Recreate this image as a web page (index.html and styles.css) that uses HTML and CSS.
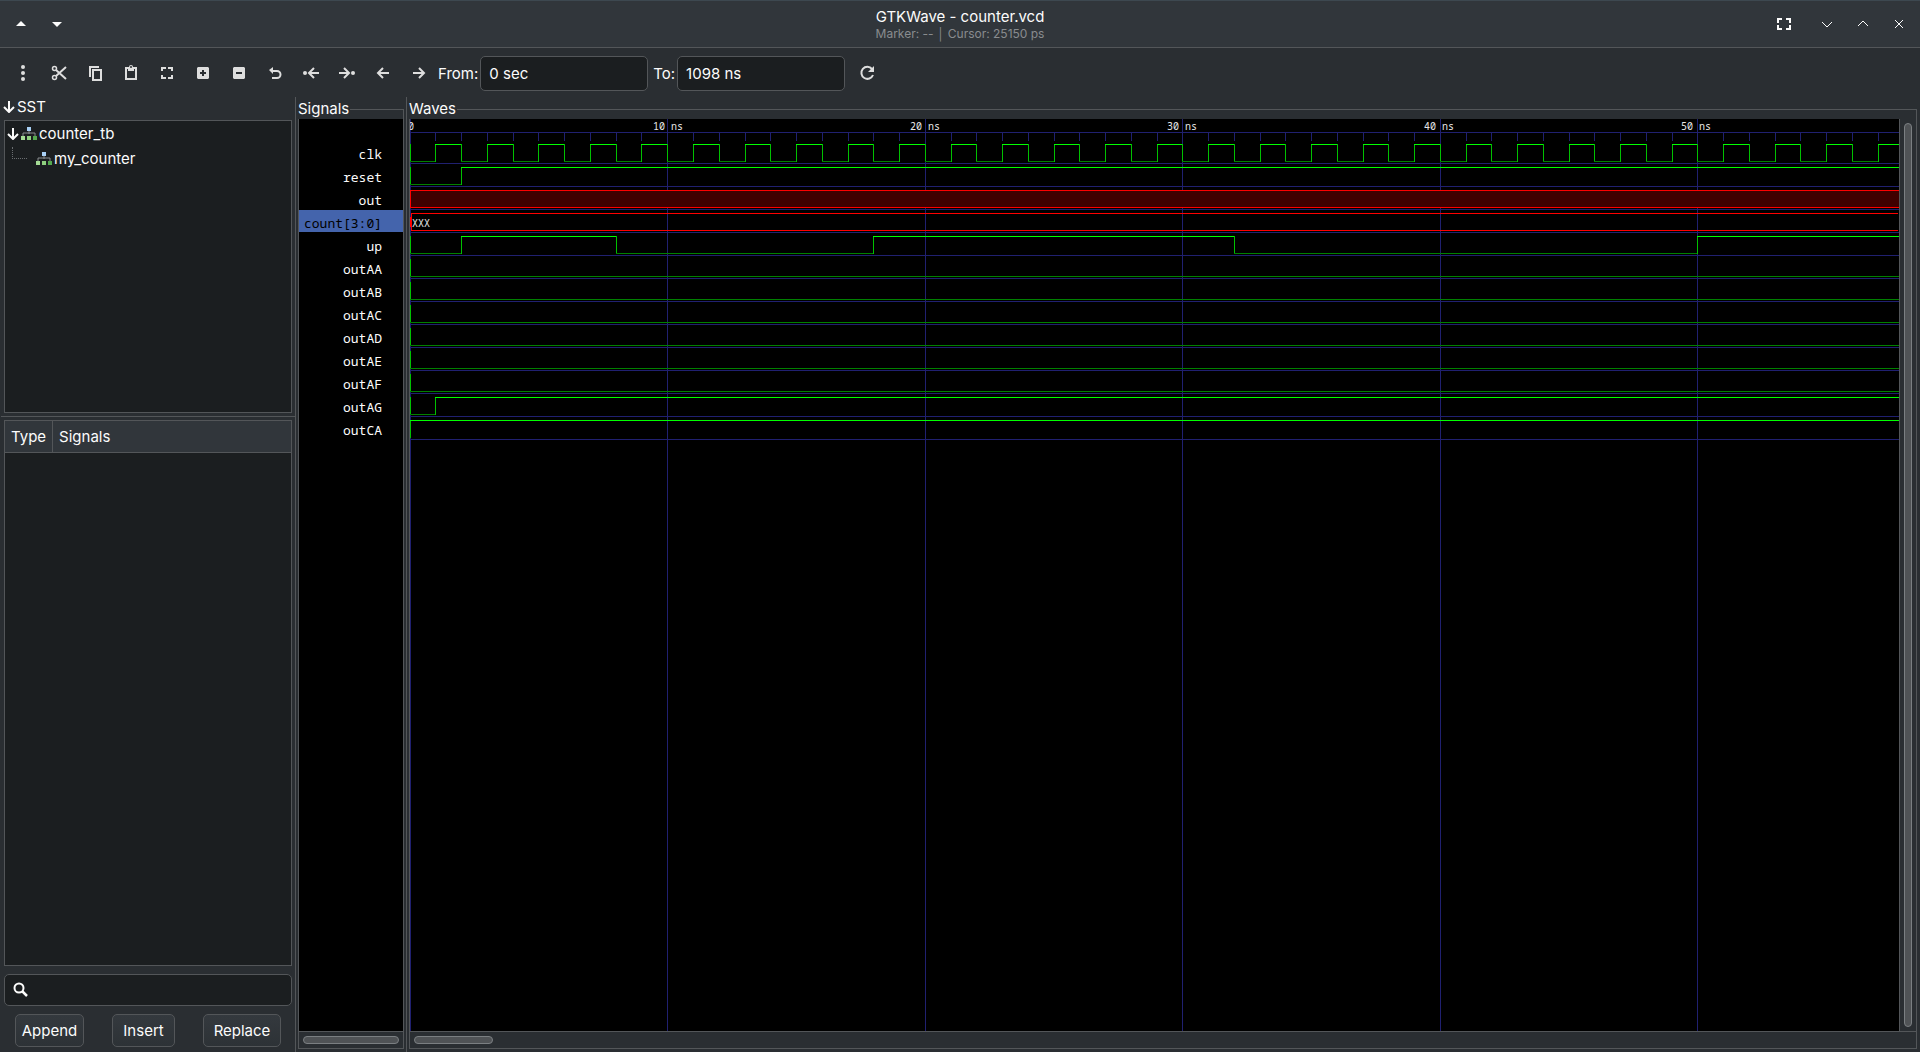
FILE: index.html
```html
<!DOCTYPE html>
<html lang="en">
<head>
    <meta charset="UTF-8">
    <meta name="viewport" content="width=device-width, initial-scale=1.0">
    <title>GTKWave - counter.vcd</title>
    <link rel="stylesheet" href="styles.css">
</head>
<body>
    <svg class="defs" aria-hidden="true">
        <symbol id="hierarchy" viewBox="0 0 16 14">
            <path d="M8 4v3M2 9V6h12v3" fill="none" stroke="#8a8d8f"/>
            <rect x="6" y="0" width="4" height="4" fill="#a9d0f5"/>
            <rect x="0" y="9" width="4" height="4" fill="#a5dc95"/>
            <rect x="6" y="9" width="4" height="4" fill="#8fd07f"/>
            <rect x="12" y="9" width="4" height="4" fill="#55a94f"/>
        </symbol>
        <symbol id="expander" viewBox="0 0 12 12">
            <path d="M6 0v11M1 6l5 5 5-5" fill="none" stroke="#fcfcfc" stroke-width="2"/>
        </symbol>
    </svg>

    <header class="titlebar">
        <div class="titlebar-side">
            <button type="button" aria-label="Keep above">
                <svg width="16" height="16"><path d="M3 10l5-5 5 5z" fill="currentColor"/></svg>
            </button>
            <button type="button" aria-label="Keep below">
                <svg width="16" height="16"><path d="M3 6l5 5 5-5z" fill="currentColor"/></svg>
            </button>
        </div>
        <div class="titles">
            <h1>GTKWave - counter.vcd</h1>
            <p>Marker: -- │ Cursor: 25150 ps</p>
        </div>
        <div class="titlebar-side titlebar-end">
            <button type="button" class="wide" aria-label="Full screen">
                <svg width="16" height="16"><path d="M2 7V3h4M10 3h4v4M14 9v4h-4M6 13H2V9" class="line thick"/></svg>
            </button>
            <button type="button" aria-label="Minimize">
                <svg width="16" height="16"><path d="M3 6l5 5 5-5" class="line"/></svg>
            </button>
            <button type="button" aria-label="Maximize">
                <svg width="16" height="16"><path d="M3 10l5-5 5 5" class="line"/></svg>
            </button>
            <button type="button" aria-label="Close">
                <svg width="16" height="16"><path d="M4 4l8 8M12 4l-8 8" class="line"/></svg>
            </button>
        </div>
    </header>

    <div class="toolbar">
        <button type="button" aria-label="Menu">
            <svg width="16" height="16"><g fill="currentColor"><circle cx="8" cy="2" r="2"/><circle cx="8" cy="8" r="2"/><circle cx="8" cy="14" r="2"/></g></svg>
        </button>
        <button type="button" aria-label="Cut">
            <svg width="16" height="16"><circle cx="3.5" cy="3.5" r="2" class="line bold"/><circle cx="3.5" cy="12.5" r="2" class="line bold"/><path d="M5 5l10 9M5 11l10-9" class="line thick"/></svg>
        </button>
        <button type="button" aria-label="Copy">
            <svg width="16" height="16"><path d="M3 12V2h9M6 5h8v10H6z" class="line thick"/></svg>
        </button>
        <button type="button" aria-label="Paste">
            <svg width="16" height="16"><path d="M3 3h10v11H3z" class="line thick"/><path d="M5 2h6v4H5z" fill="currentColor"/><circle cx="8" cy="2" r="2" fill="currentColor"/><circle cx="8" cy="2" r="1" fill="#2a2e32"/></svg>
        </button>
        <button type="button" aria-label="Zoom fit">
            <svg width="16" height="16"><path d="M3 6V3h4M9 3h4v3M13 10v3H9M7 13H3v-3" class="line thick"/></svg>
        </button>
        <button type="button" aria-label="Zoom in">
            <svg width="16" height="16"><path d="M3 2h10l1 1v10l-1 1H3l-1-1V3z" fill="currentColor"/><path d="M8 5v6M5 8h6" stroke="#2a2e32" stroke-width="2"/></svg>
        </button>
        <button type="button" aria-label="Zoom out">
            <svg width="16" height="16"><path d="M3 2h10l1 1v10l-1 1H3l-1-1V3z" fill="currentColor"/><path d="M5 8h6" stroke="#2a2e32" stroke-width="2"/></svg>
        </button>
        <button type="button" aria-label="Zoom undo">
            <svg width="16" height="16"><path d="M5 6h5a3.5 3.5 0 0 1 0 7H5" class="line thick"/><path d="M2 5l4-3v7z" fill="currentColor"/></svg>
        </button>
        <button type="button" aria-label="Previous edge">
            <svg width="16" height="16"><circle cx="2" cy="8" r="2" fill="currentColor"/><path d="M16 8H7M11 3L6 8l5 5" class="line thick"/></svg>
        </button>
        <button type="button" aria-label="Next edge">
            <svg width="16" height="16"><circle cx="14" cy="8" r="2" fill="currentColor"/><path d="M0 8h9M5 3l5 5-5 5" class="line thick"/></svg>
        </button>
        <button type="button" aria-label="Previous page">
            <svg width="16" height="16"><path d="M14 8H4M8 3L3 8l5 5" class="line thick"/></svg>
        </button>
        <button type="button" aria-label="Next page">
            <svg width="16" height="16"><path d="M2 8h10M8 3l5 5-5 5" class="line thick"/></svg>
        </button>
        <label for="from">From:</label>
        <input type="text" id="from" value="0 sec">
        <label for="to">To:</label>
        <input type="text" id="to" value="1098 ns">
        <button type="button" aria-label="Reload">
            <svg width="16" height="16"><path d="M13 4a6 6 0 1 0 1 6" class="line thick"/><path d="M15 1v6H9z" fill="currentColor"/></svg>
        </button>
    </div>

    <main class="panes">
        <section class="sst">
            <h2 class="sst-title"><svg width="12" height="12"><use href="#expander"/></svg>SST</h2>
            <ul class="tree">
                <li class="root"><svg width="12" height="12"><use href="#expander"/></svg><svg width="16" height="14"><use href="#hierarchy"/></svg>counter_tb</li>
                <li class="child"><span class="branch"></span><svg width="16" height="14"><use href="#hierarchy"/></svg>my_counter</li>
            </ul>
            <div class="handle"></div>
            <div class="facilities">
                <table>
                    <thead>
                        <tr>
                            <th class="type">Type</th>
                            <th>Signals</th>
                        </tr>
                    </thead>
                    <tbody></tbody>
                </table>
            </div>
            <div class="search">
                <svg width="16" height="16"><circle cx="6" cy="6" r="4.5" class="line thick"/><path d="M9 9l5 5" class="line heavy"/></svg>
                <input type="text" id="search" aria-label="Filter signals">
            </div>
            <div class="actions">
                <button type="button" class="append">Append</button>
                <button type="button" class="insert">Insert</button>
                <button type="button" class="replace">Replace</button>
            </div>
        </section>

        <section class="frame signals">
            <h2>Signals</h2>
            <div class="frame-body">
                <ul class="names" id="names"></ul>
                <div class="hscroll"><div class="thumb full"></div></div>
            </div>
        </section>

        <section class="frame waves">
            <h2>Waves</h2>
            <div class="frame-body">
                <div class="view">
                    <svg class="canvas" id="canvas"></svg>
                    <div class="vscroll"><div class="thumb"></div></div>
                </div>
                <div class="hscroll"><div class="thumb part"></div></div>
            </div>
        </section>
    </main>

    <script>
        const canvas = document.getElementById('canvas');
        const names = document.getElementById('names');

        const NS = 25.752;      // pixels per nanosecond
        const ROW = 23;
        const WIDTH = Math.floor(canvas.getBoundingClientRect().width);
        const END = Math.ceil(WIDTH / NS);

        const clock = [];
        for (let t = 1; t < END; t++) clock.push(t);

        // edges: times in ns where the level toggles
        const signals = [
            { name: 'clk', start: 0, edges: clock },
            { name: 'reset', start: 0, edges: [2] },
            { name: 'out', unknown: true },
            { name: 'count[3:0]', bus: 'XXX', selected: true },
            { name: 'up', start: 0, edges: [2, 8, 18, 32, 50] },
            { name: 'outAA', start: 0, edges: [] },
            { name: 'outAB', start: 0, edges: [] },
            { name: 'outAC', start: 0, edges: [] },
            { name: 'outAD', start: 0, edges: [] },
            { name: 'outAE', start: 0, edges: [] },
            { name: 'outAF', start: 0, edges: [] },
            { name: 'outAG', start: 0, edges: [1] },
            { name: 'outCA', start: 1, edges: [] }
        ];

        function xAt(t) {
            return Math.min(WIDTH, Math.floor(t * NS + 0.23));
        }

        function add(tag, attrs, text) {
            const el = document.createElementNS('http://www.w3.org/2000/svg', tag);
            for (const key in attrs) el.setAttribute(key, attrs[key]);
            if (text) el.textContent = text;
            canvas.appendChild(el);
        }

        function hline(x1, x2, y, cls) {
            add('rect', { x: x1, y: y, width: x2 - x1, height: 1, class: cls });
        }

        function vline(x, y1, y2, cls) {
            add('rect', { x: x, y: y1, width: 1, height: y2 - y1, class: cls });
        }

        // time grid
        hline(0, WIDTH, 13, 'grid');
        for (let t = 0; t < END; t++) {
            if (t % 10 === 0) {
                add('rect', { x: xAt(t), y: 0, width: 1, height: '100%', class: 'grid' });
                add('text', { x: Math.round(t * 25.7) + 1, y: 11, 'text-anchor': 'middle' }, t === 0 ? '0' : t + ' ns');
            } else {
                vline(xAt(t), 13, 22, 'grid');
            }
        }

        signals.forEach((signal, i) => {
            const li = document.createElement('li');
            li.textContent = signal.name;
            if (signal.selected) li.className = 'selected';
            names.appendChild(li);

            const high = 25 + i * ROW;
            const low = high + 17;
            hline(0, WIDTH, low + 2, 'grid');

            if (signal.unknown) {
                add('rect', { x: 0, y: high, width: WIDTH, height: 18, class: 'undef' });
                vline(0, high, low + 1, 'bad');
                hline(0, WIDTH, high, 'bad');
                hline(0, WIDTH, low, 'bad');
            } else if (signal.bus) {
                vline(1, high, low + 1, 'bad');
                vline(0, high + 4, low - 3, 'bad');
                hline(1, WIDTH - 1, high, 'bad');
                hline(1, WIDTH - 1, low, 'bad');
                add('text', { x: 2, y: low - 3 }, signal.bus);
            } else {
                let level = signal.start;
                let from = 0;
                vline(0, high, low + 1, 'edge');
                signal.edges.concat(END).forEach(t => {
                    hline(xAt(from), xAt(t), level ? high : low, level ? 'high' : 'low');
                    if (t < END) vline(xAt(t), high, low + 1, 'edge');
                    level = 1 - level;
                    from = t;
                });
            }
        });
    </script>
</body>
</html>
```
FILE: styles.css
```css
* {
    box-sizing: border-box;
}
body {
    display: flex;
    flex-direction: column;
    height: 100vh;
    margin: 0;
    overflow: hidden;
    background-color: #2a2e32;
    color: #fcfcfc;
    font-family: Inter, sans-serif;
    font-size: 15px;
}
h1, h2, p, ul {
    margin: 0;
    padding: 0;
    font-size: 15px;
    font-weight: 400;
}
ul {
    list-style: none;
}
svg {
    display: block;
    flex: none;
}
button, input {
    font: inherit;
    color: inherit;
}
.defs {
    display: none;
}
.line {
    fill: none;
    stroke: currentColor;
}
.bold {
    stroke-width: 1.5;
}
.thick {
    stroke-width: 2;
}
.heavy {
    stroke-width: 2.5;
}

/* title bar */
.titlebar {
    display: flex;
    align-items: center;
    height: 48px;
    padding: 0 3px;
    border-top: 1px solid #3d4850;
    border-bottom: 1px solid #535659;
    background-color: #31363b;
}
.titlebar-side {
    display: flex;
    flex: 1;
}
.titlebar-end {
    justify-content: flex-end;
}
.titlebar button, .toolbar button {
    display: flex;
    align-items: center;
    justify-content: center;
    width: 36px;
    height: 36px;
    padding: 0;
    border: none;
    background: none;
}
.titlebar .wide {
    width: 50px;
}
.titles {
    text-align: center;
}
.titles h1 {
    line-height: 18px;
}
.titles p {
    color: #898c8f;
    font-size: 12px;
    line-height: 15px;
}

/* toolbar */
.toolbar {
    display: flex;
    align-items: center;
    height: 49px;
    padding: 1px 5px 0;
}
.toolbar button {
    color: #dedede;
}
.toolbar label {
    padding: 0 2px 0 1px;
}
.toolbar input {
    width: 168px;
    height: 35px;
    margin-right: 4px;
    padding: 0 8px;
}
input {
    border: 1px solid #535659;
    border-radius: 5px;
    background-color: #1b1e20;
}

/* panes */
.panes {
    display: flex;
    flex: 1;
    min-height: 0;
}
.sst {
    display: flex;
    flex-direction: column;
    width: 295px;
    padding: 0 3px 5px 4px;
}
.sst-title {
    display: flex;
    align-items: center;
    gap: 2px;
    height: 23px;
    padding-bottom: 4px;
    margin-left: -1px;
}
.tree {
    height: 293px;
    border: 1px solid #535659;
    background-color: #1b1e20;
}
.tree li {
    display: flex;
    align-items: center;
    gap: 2px;
    height: 25px;
    padding-left: 2px;
}
.tree .child {
    padding-left: 7px;
}
.branch {
    width: 15px;
    height: 12px;
    margin: 0 7px 12px 0;
    border: 1px dotted #6a6d70;
    border-width: 0 0 1px 1px;
}
.handle {
    height: 1px;
    margin: 3px -3px 3px -3px;
    background-color: #535659;
}
.facilities {
    flex: 1;
    border: 1px solid #535659;
    background-color: #1b1e20;
}
table {
    width: 100%;
    border-collapse: separate;
    border-spacing: 0;
}
th {
    height: 32px;
    padding: 0 6px;
    border-bottom: 1px solid #535659;
    background-color: #31363b;
    font-weight: 400;
    text-align: left;
}
th.type {
    width: 48px;
    border-right: 1px solid #535659;
}
.search {
    display: flex;
    align-items: center;
    height: 32px;
    margin: 8px 0;
    padding-left: 8px;
    border: 1px solid #535659;
    border-radius: 5px;
    background-color: #1b1e20;
}
.search input {
    flex: 1;
    min-width: 0;
    border: none;
    background: none;
}
.actions {
    display: flex;
    justify-content: space-between;
    padding: 0 11px;
}
.actions button {
    height: 33px;
    padding: 0;
    border: 1px solid #535659;
    border-radius: 5px;
    background: linear-gradient(#34393e, #2d3236);
}
.append {
    width: 69px;
}
.insert {
    width: 63px;
}
.replace {
    width: 78px;
}

/* framed panes */
.frame {
    display: flex;
    flex-direction: column;
    padding: 0 2px 3px 2px;
    border-left: 1px solid #535659;
}
.frame h2 {
    display: flex;
    height: 22px;
    line-height: 24px;
}
.frame h2::after {
    content: "";
    flex: 1;
    margin: 12px 0 0 1px;
    border: 1px solid #535659;
    border-width: 1px 1px 0 0;
}
.frame-body {
    display: flex;
    flex: 1;
    flex-direction: column;
    min-height: 0;
    border: 1px solid #535659;
    border-top: none;
}
.signals {
    width: 111px;
}
.waves {
    flex: 1;
    min-width: 0;
    padding-right: 3px;
}
.names {
    flex: 1;
    padding-top: 22px;
    background-color: #000;
    font-family: "Noto Sans Mono", "DejaVu Sans Mono", monospace;
    font-size: 13px;
    text-align: right;
}
.names li {
    height: 22px;
    margin-bottom: 1px;
    padding-right: 21px;
    line-height: 26px;
}
.names .selected {
    background-color: #4464ac;
    color: #000;
}
.view {
    display: flex;
    flex: 1;
    min-height: 0;
}
.canvas {
    flex: 1;
    min-width: 0;
    height: 100%;
    background-color: #000;
    font-family: "Noto Sans Mono", "DejaVu Sans Mono", monospace;
    font-size: 10px;
}
.canvas text {
    fill: #e6e6e6;
}
.grid {
    fill: #202070;
}
.high {
    fill: #00ff00;
}
.low {
    fill: #008000;
}
.edge {
    fill: #00c000;
}
.bad {
    fill: #ff0000;
}
.undef {
    fill: #400000;
}
.vscroll {
    display: flex;
    width: 17px;
    padding: 4px;
    border-left: 1px solid #535659;
}
.hscroll {
    height: 17px;
    padding: 4px;
    border-top: 1px solid #535659;
}
.thumb {
    width: 8px;
    border: 1px solid #7b7f82;
    border-radius: 4px;
    background-color: #505356;
}
.hscroll .thumb {
    height: 8px;
}
.hscroll .full {
    width: 100%;
}
.hscroll .part {
    width: 79px;
}
```
